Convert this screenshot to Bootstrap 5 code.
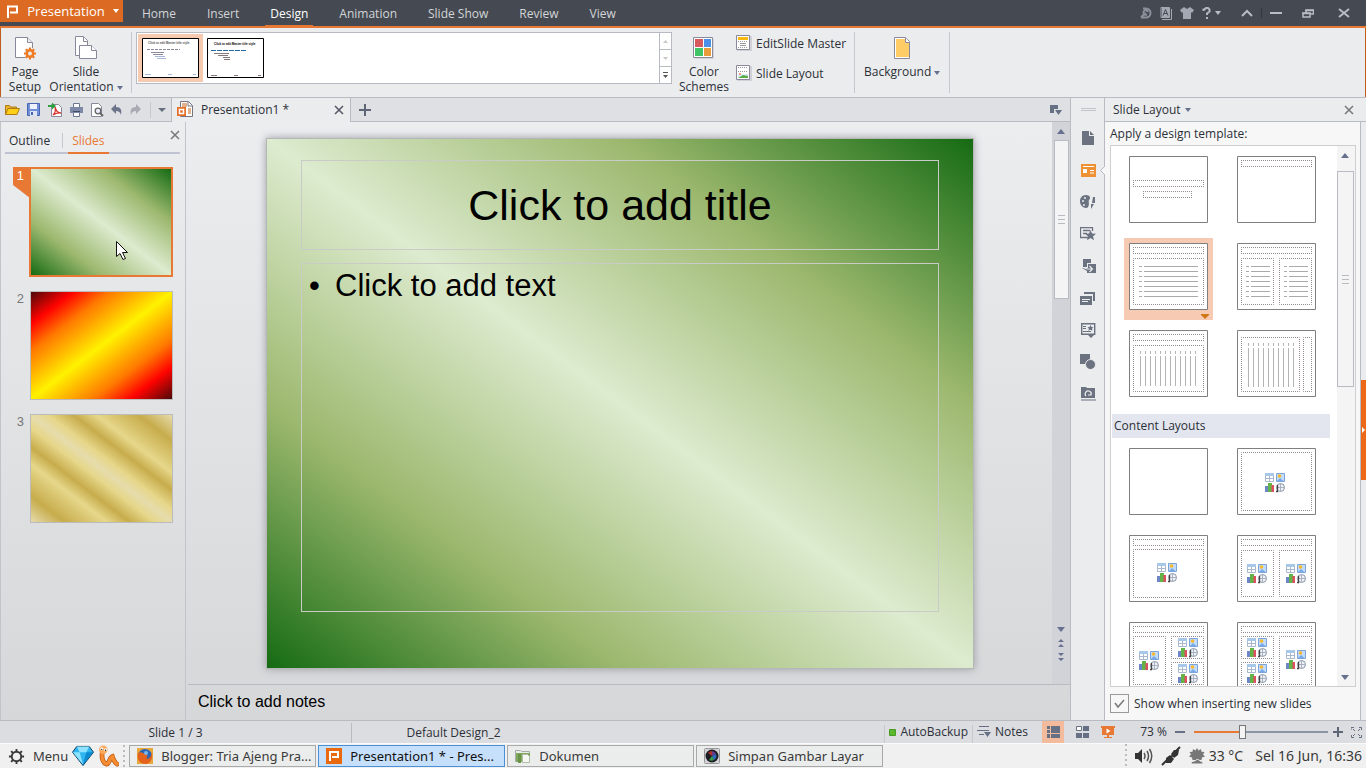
<!DOCTYPE html>
<html lang="en">
<head>
<meta charset="utf-8">
<meta name="viewport" content="width=device-width, initial-scale=1">
<title>Presentation1 - Presentation</title>
<link href="https://cdn.jsdelivr.net/npm/bootstrap@5.3.0/dist/css/bootstrap.min.css" rel="stylesheet">
<style>
:root{--accent:#e77935;--line:#b9bbc3;--ink:#2b3038;--slate:#6b7280}
body{font:12px/16px "Open Sans","Noto Sans",sans-serif;color:var(--ink);background:#ebecee}
button{color:inherit;font:inherit}
.plain{background:none;border:0;padding:0}
svg{display:block;flex:none}
a{color:inherit;text-decoration:none}
.min0{min-width:0;min-height:0}
/* title bar */
.topbar{height:28px;background:#454951;border-bottom:2px solid var(--accent);color:#d3d5d8}
.brand-btn{width:123px;height:22px;background:#dc6a22;color:#fff;padding:0 4px 0 6px}
.brand-btn span{font-size:13px}
.ribbon-tabs{gap:21px;margin-left:14px;height:28px}
.ribbon-tabs a{padding:6px 5px 3px;height:28px;border-bottom:3px solid transparent;white-space:nowrap}
.ribbon-tabs a.active{color:#fff;border-color:var(--accent)}
.wintools{color:#b9bcc6}
/* ribbon */
.ribbon{height:69px;border:solid #c25c1c;border-width:0 1px;padding:4px 0 0 8px}
.ribbon button{line-height:15px}
.vr-line{width:1px;background:#c6c8ce;align-self:stretch}
.gallery{width:536px;height:52px;border:1px solid var(--line);background:#fff;padding:1px 0 0 1px}
.gallery .pick{width:65px;height:48px;padding:4px}
.gallery .pick.on{background:#f6cab1}
.gal-scroll{width:12px;border-left:1px solid var(--line);margin-top:-1px}
.gal-scroll button{flex:1;border-bottom:1px solid var(--line);display:grid;place-items:center}
.gal-scroll button:last-child{border-bottom:0}
.stacked{gap:14px;padding-top:3px}
/* tab strip */
.strip{height:25px;background:#dfe0e4;border:solid var(--line);border-width:1px 0}
.quick{width:171px;padding:0 5px}
.doc-tab{width:180px;background:#ebecee;border:solid var(--line);border-width:0 1px;height:24px;padding:0 6px 0 5px}
.work{background:linear-gradient(#ecedef,#d6d7d9)}
/* slide list */
.slides-pane{width:186px;border:solid #c3c4ca;border-width:0 1px}
.pane-tabs{margin:0 5px 0 4px;border-bottom:2px solid #c0c4d2;height:32px}
.pane-tabs button{height:32px;padding:8px 4px 0;border-bottom:2px solid transparent}
.pane-tabs .on{color:var(--accent);border-color:var(--accent)}
.pane-tabs .shut{height:26px;padding:0;border:0}
.tab-sep{margin:11px 5px 4px 8px}
.num{width:28px;padding:1px 5px 0 0;text-align:right;color:#777;font:13px/15px "Liberation Sans",sans-serif}
.num.on{color:#fff}
.flag{position:absolute;left:12px;top:0}
.flag + span{position:relative}
.slide-thumb{width:143px;height:109px;border:1px solid #bbb;margin:1px 0 0 1px}
.slide-thumb.on{width:144px;height:110px;border:2px solid var(--accent);margin:0}
.g-green{background:linear-gradient(to top right,#156b13,#9cb86e 25%,#ddebcf 50%,#9cb86e 75%,#156b13)}
.g-fire{background:linear-gradient(to bottom right,#4d0808,#ff0300 15%,#ff7a00 28%,#fff200 50%,#ff7a00 72%,#ff0300 85%,#4d0808)}
.g-gold{background:linear-gradient(to top right,#e6dcac,#c7ac4c 12%,#e6d78a 27%,#c7ac4c 35%,#e6d78a 44%,#e6dcac 50%,#e6d78a 56%,#c7ac4c 65%,#e6d78a 73%,#c7ac4c 88%,#e6dcac)}
.pointer{position:absolute;left:85px;top:72px}
/* stage */
.stage{padding:0 78px 0 80px}
.slide{aspect-ratio:4/3;border:1px solid #b4b6b8;box-shadow:0 0 8px #9a9ca0;padding:21px 34px 56px;font-family:"Liberation Sans",sans-serif;color:#000;gap:13px}
.ph{border:1px solid #c9cbc6}
.ph-title{height:90px;font-size:43px;line-height:52px;font-weight:400}
.ph-body{font-size:31px;line-height:36px;padding:4px 7px}
.ph-body ul{padding-left:26px;list-style:none}
.ph-body li::before{content:"•";position:absolute;left:7px}
.notes{height:36px;border:0;border-top:1px solid var(--line);margin-left:2px;padding:7px 10px;background:none;resize:none;font:16px/20px "Liberation Sans",sans-serif;color:#000;overflow:hidden}
.vscroll{width:18px;background:#d2d3d9;padding-bottom:20px}
.knob{width:15px;border:1px solid var(--line);background:#f4f4f5;display:grid;place-items:center}
.arrow{display:grid;place-items:center;height:18px;width:16px;flex:none}
.arrow.short{height:14px}
.k-main{height:159px}
.k-lay{height:216px;width:17px;margin-top:7px}
/* right side */
.rail{width:34px;border:solid var(--line);border-width:1px 0 0 1px;color:var(--slate);padding:10px 0 0 1px}
.rail button{height:32px;display:grid;place-items:center;width:33px;flex:none}
.grip{margin-bottom:10px}
.task-pane{width:262px;border:1px solid var(--line);border-width:1px 0 0 1px}
.pane-head{height:24px;padding:0 12px 0 8px;border-bottom:1px solid var(--line)}
.pane-body{background:#f7f7f7;border-right:1px solid var(--line);margin-right:5px;padding:4px 4px 0 5px}
.layouts{border:1px solid #cfcfd2;background:#fff}
.lay-scroll{overflow:hidden;flex:1}
.lay-grid{display:grid;grid-template-columns:89px 89px;gap:5px 19px;padding:5px 13px 7px}
.lay-grid button{padding:5px 5px 10px;height:82px;position:relative}
.lay-grid .on{background:#f6cab3}
.lay-head{background:#e3e6ef;height:24px;margin:0 7px 0 1px;padding:4px 2px}
.lay-bar{width:18px;background:#f4f4f4}
.show-row{height:33px}
.show-row input{appearance:none;width:19px;height:19px;margin:0 5px 0 0;border:1px solid #999;background:#f7f7f7 url("data:image/svg+xml,%3Csvg xmlns='http://www.w3.org/2000/svg' viewBox='0 0 17 17'%3E%3Cpath d='M4 8l3 4 6-7' fill='none' stroke='%23777' stroke-width='1.5'/%3E%3C/svg%3E")}
.handle{position:absolute;right:0;top:283px;width:5px;height:100px;background:#ec6a17;display:grid;place-items:center}
/* status */
.status{height:23px;background:#dcdde1;border-top:1px solid var(--line)}
.status .cell{margin-top:2px;padding-top:2px;height:20px}
.status .c1{width:352px;border-right:1px solid var(--line)}
.status .c2{width:203px}
.view-on{width:22px;place-items:center;background:#f3bb9c;margin-left:14px}
.pct{width:56px}
.zoomer{appearance:none;width:134px;height:16px;margin:0 5px;background:none}
.zoomer::-webkit-slider-runnable-track{height:2px;background:linear-gradient(90deg,var(--accent) 36%,#8a95a6 36%)}
.zoomer::-webkit-slider-thumb{appearance:none;width:7px;height:14px;margin-top:-6px;border:1px solid #777;background:#f4f4f4}
/* desktop panel */
.deskbar{height:25px;background:#f0f0f0;border-top:1px solid #fafafa;font-family:"Noto Sans",sans-serif;font-size:13px;color:#3a3a3a;padding-top:1px}
.deskbar .task{width:187px;height:22px;border:1px solid #a9a9a9;background:#ebedec;padding:0 7px;gap:8px;text-align:left}
.deskbar .task.on{background:#c6dffb;border-color:#4a90d9;color:#111}
.menu-btn{height:22px;gap:8px}
.tray{height:22px}
.tray span{font-size:14px;white-space:nowrap}
.dots{width:2px;height:24px;background:repeating-linear-gradient(#bbb 0 2px,transparent 2px 5px)}
</style>
</head>
<body class="vh-100 d-flex flex-column overflow-hidden">
<svg width="0" height="0" class="position-absolute" aria-hidden="true">
<defs>
<symbol id="dn" viewBox="0 0 8 5"><path d="M0 0h8L4 5z"/></symbol>
<symbol id="up" viewBox="0 0 8 5"><path d="M0 5h8L4 0z"/></symbol>
<symbol id="x" viewBox="0 0 10 10"><path d="M1 1l8 8M9 1l-8 8" stroke="currentColor" stroke-width="1.500" fill="none"/></symbol>
<symbol id="media" viewBox="0 0 20 20">
<path fill="#fff" stroke="#a9b8cc" d="M.5.500h8v8h-8zM.5 5.500h8M4.500 3v5.500"/><path fill="#a8c8ea" d="M0 0h9v3H0z"/>
<path fill="#c4dcf8" stroke="#7ba4dc" d="M11.500.500h8v8h-8z"/><path d="M12 8l3-3 4 3.500z" fill="#77a9e8"/><circle cx="14.500" cy="3" r="1.800" fill="#f5b82e"/>
<path fill="#6d86c8" d="M0 13h4v6H0z"/><path fill="#63b447" d="M3 10h4v9H3z"/><path fill="#dd5060" d="M6.500 12H9v7H6.500z"/>
<circle cx="15.500" cy="14.500" r="4" fill="#eef1f6" stroke="#8b97a8"/><path d="M15.500 11v7M12 14.500h7" stroke="#9aa5b8" stroke-width=".8"/><path d="M12.500 12v6.500H11" stroke="#444" fill="none" stroke-width="1.300"/>
</symbol>
<symbol id="frame" viewBox="0 0 79 67"><path d="M.5.500h78v66h-78z" fill="#fff" stroke="#7f7f7f"/></symbol>
<symbol id="ttl" viewBox="0 0 79 67"><path d="M4 4.500h71M4 10.500h71M4.500 4v7M74.500 4v7" stroke="#928c90" stroke-dasharray="1 1"/></symbol>
<symbol id="gear" viewBox="0 0 18 18"><circle cx="9" cy="9" r="5" fill="none" stroke="currentColor" stroke-width="2"/><path d="M9 1v3M9 14v3M1 9h3M14 9h3M3.300 3.300l2 2M12.700 12.700l2 2M3.300 14.700l2-2M12.700 5.300l2-2" stroke="currentColor" stroke-width="2"/></symbol>
</defs>
</svg>

<header class="topbar d-flex flex-shrink-0">
  <button class="plain brand-btn d-flex align-items-center justify-content-between">
    <svg width="13" height="13" viewBox="0 0 13 13"><path d="M2 13V1.500h9v6H4" fill="none" stroke="#fff" stroke-width="2"/></svg>
    <span>Presentation</span><svg width="6" height="4" fill="#fff"><path d="M0 0h6L3 4z"/></svg>
  </button>
  <nav class="ribbon-tabs d-flex"><a href="#">Home</a><a href="#">Insert</a><a href="#" class="active">Design</a><a href="#">Animation</a><a href="#">Slide Show</a><a href="#">Review</a><a href="#">View</a></nav>
  <div class="wintools ms-auto d-flex align-items-center pe-3">
    <button class="plain me-2" aria-label="Cloud"><svg width="12" height="12" viewBox="0 0 12 12" fill="none" stroke="#8b8f9a" stroke-width="2"><path d="M3 1.500h3a4.500 4.500 0 0 1 0 9H1M8 5a2.300 2.300 0 1 0-1 2.500M1 10l5-4"/></svg></button>
    <button class="plain me-2" aria-label="Language"><svg width="12" height="13"><path d="M1 .5h8.500v10H1zM11.500 2v10.500H2" fill="none" stroke="#a4a8b3"/><path d="M2 1h7v9H2z" fill="#a4a8b3"/><path d="M3 8.500l2.500-6 2.500 6M4 6.500h3" stroke="#454951" fill="none"/></svg></button>
    <button class="plain me-2" aria-label="Skin"><svg width="14" height="12" fill="#a4a8b3"><path d="M4 0l3 2 3-2 4 3-2 3-1-1v7H3V5L2 6 0 3z"/></svg></button>
    <button class="plain me-3 d-flex align-items-center gap-1" aria-label="Help"><svg width="9" height="12" fill="none" stroke="#b4b7c0" stroke-width="2"><path d="M1.500 4V2.500h1L4 1h2l1.500 1.500v2L5 6.500V8M4 11h2"/></svg><svg width="6" height="4" fill="#b9bcc6"><path d="M0 0h6L3 4z"/></svg></button>
    <button class="plain ms-1 me-2" aria-label="Collapse ribbon"><svg width="12" height="8" fill="none" stroke="currentColor" stroke-width="2"><path d="M1 7l5-5 5 5"/></svg></button>
    <span class="vr-line my-2 me-2" style="background:#33363c"></span>
    <button class="plain me-3" aria-label="Minimise"><svg width="12" height="2" fill="currentColor"><path d="M0 0h12v2H0z"/></svg></button>
    <button class="plain ms-1 me-4" aria-label="Restore"><svg width="12" height="9" fill="none" stroke="currentColor" stroke-width="1.500"><path d="M1 4h7v4H1zM4 4V1h7.500v4H9"/><path d="M0 4.500h9M3 1.500h9"/></svg></button>
    <button class="plain" aria-label="Close"><svg width="12" height="10" fill="none" stroke="currentColor" stroke-width="2"><path d="M1 1l10 8M11 1L1 9"/></svg></button>
  </div>
</header>

<section class="ribbon d-flex flex-shrink-0">
  <button class="plain d-flex flex-column align-items-center pt-1" style="width:32px">
    <svg width="24" height="24" viewBox="0 0 24 24" class="mb-1"><path d="M2.500 1.500h12l5 5v15h-17z" fill="#fff" stroke="#8c889c"/><path d="M14.500 1.500v5h5" fill="#eee" stroke="#8c889c"/><circle cx="17" cy="17.500" r="6" fill="#ebecee"/><circle cx="17" cy="17.500" r="3.200" fill="none" stroke="#ee7b24" stroke-width="2.500"/><path d="M17 11.500v3M17 20.500v3M11 17.500h3M20 17.500h3M12.800 13.300l2 2M19.200 19.700l2 2M12.800 21.700l2-2M19.200 15.300l2-2" stroke="#ee7b24" stroke-width="2"/></svg>Page<br>Setup</button>
  <button class="plain d-flex flex-column align-items-center pt-1 ms-2" style="width:74px">
    <svg width="24" height="24" viewBox="0 0 24 24" class="mb-1" fill="#fff" stroke="#8c889c"><path d="M1.500.500h8l4 4v15h-12z"/><path d="M9.500.500v5h4M5.500 9.500h12l5 5v8h-17z"/><path d="M17.500 9.500v5h5"/></svg>Slide<span class="text-nowrap">Orientation <svg class="d-inline" width="6" height="4" fill="#687090"><path d="M0 0h6L3 4z"/></svg></span></button>
  <span class="vr-line mb-1 ms-2 me-1"></span>
  <div class="gallery d-flex">
    <button class="plain pick on" aria-label="Design 1"><svg width="57" height="40" font-family="Liberation Sans"><path d="M.5.500h56v39H.5z" fill="#fff" stroke="#000"/><text x="6" y="6" font-size="3" fill="#555" font-weight="700">Click to edit Master title style</text><path d="M5 11.500h33" stroke="#889" stroke-dasharray="3 1"/><g fill="#889"><path d="M9 14h13v1H9zM11 16h10v1H11z"/><path fill="#a9b8d8" d="M13 18h10v1H13zM15 20h9v1h-9zM3 36h6v1H3zM26 36h4v1h-4zM51 36h3v1h-3z"/></g></svg></button>
    <button class="plain pick" aria-label="Design 2"><svg width="57" height="40" font-family="Liberation Sans"><path d="M.5.500h56v39H.5z" fill="#fff" stroke="#000"/><text x="7" y="7" font-size="3" font-weight="700">Click to edit Master title style</text><path d="M4 12.500h35" stroke="#246a9e" stroke-dasharray="5 1"/><path d="M7 15h15v1H7zM11 17h10v1H11zM16 19h7v1h-7zM17 21h6v1h-6zM4 37h6v1H4zM27 37h4v1h-4zM51 37h3v1h-3z" fill="#877"/></svg></button>
    <div class="gal-scroll ms-auto d-flex flex-column">
      <button class="plain" aria-label="Up"><svg width="5" height="3" fill="#c8c8cc"><path d="M0 3h5L2.500 0z"/></svg></button>
      <button class="plain" aria-label="Down"><svg width="5" height="3" fill="#c8c8cc"><path d="M0 0h5L2.500 3z"/></svg></button>
      <button class="plain" aria-label="More"><svg width="5" height="6" fill="#555"><path d="M0 0h5v1H0zM0 3h5L2.500 6z"/></svg></button>
    </div>
  </div>
  <button class="plain d-flex flex-column align-items-center pt-1 ms-2" style="width:48px">
    <svg width="24" height="24" viewBox="0 0 24 24" class="mb-1"><path d="M3 3h19v20H3z" fill="#d5d6dc"/><path d="M1.500 1.500h19v20h-19z" fill="#fff" stroke="#8c889c"/><path d="M3 3h8v8H3z" fill="#d85a5c"/><path d="M12 3h7v8h-7z" fill="#4a90e8"/><path d="M3 12h8v8H3z" fill="#41c467"/><path d="M12 12h7v8h-7z" fill="#e89c3c"/></svg>Color<br>Schemes</button>
  <div class="d-flex flex-column ms-2 stacked">
    <button class="plain d-flex align-items-center gap-1"><svg width="16" height="16"><path d="M1 1h15v15H1z" fill="#d0d2d8"/><path d="M.5.500h13v14H.5z" fill="#fff" stroke="#8c889c"/><path d="M2 2h10v3H2z" fill="#f9b90f"/><path d="M2 6.500h10M2 12.500h10" stroke="#999" stroke-dasharray="1 1"/><path d="M4 8.500h6M4 10.500h6" stroke="#999"/></svg>EditSlide Master</button>
    <button class="plain d-flex align-items-center gap-1"><svg width="16" height="16"><path d="M1 1h15v15H1z" fill="#d0d2d8"/><path d="M.5.500h13v14H.5z" fill="#fff" stroke="#8c889c"/><path d="M2 2.500h10M2 6.500h10" stroke="#999" stroke-dasharray="1 1"/><path d="M2 9h10v4H2z" fill="#dcecfa"/><path d="M2 13l5-3 5 1v2z" fill="#5bad46"/><circle cx="4" cy="9" r="1" fill="#f08060"/></svg>Slide Layout</button>
  </div>
  <span class="vr-line mb-1 ms-2 me-2"></span>
  <button class="plain d-flex flex-column align-items-center pt-1" style="width:78px">
    <svg width="24" height="24" viewBox="0 0 24 24" class="mb-1"><path d="M4.500 1.500h11l4 4v17h-15z" fill="#fff" stroke="#8c889c"/><path d="M6 3h9v4h4v14H6z" fill="#ffcc66"/><path d="M15.500 1.500v5h4" fill="#fff" stroke="#8c889c"/></svg><span class="text-nowrap">Background <svg class="d-inline" width="6" height="4" fill="#687090"><path d="M0 0h6L3 4z"/></svg></span></button>
  <span class="vr-line mb-1 ms-2"></span>
</section>

<main class="d-flex flex-fill min0 position-relative">
  <div class="d-flex flex-column flex-fill min0">
    <div class="strip d-flex align-items-center flex-shrink-0">
      <div class="quick d-flex align-items-center justify-content-between">
        <button class="plain" aria-label="Open"><svg width="15" height="13"><path d="M.5 11.500v-9h4l1 1.500h6v3" fill="#e8b32e" stroke="#b07a14"/><path d="M.5 11.500l2.500-6h11.500l-2.500 6z" fill="#fdd017" stroke="#b07a14"/></svg></button>
        <button class="plain" aria-label="Save"><svg width="13" height="14"><path d="M.5.500h12v12H.5z" fill="#6f8fd8" stroke="#4a66b0"/><path d="M3 1h7v5H3z" fill="#eef2fc"/><path d="M3 8h7v5H3z" fill="#dde4f6"/><path d="M4 9h2v3H4z" fill="#4a66b0"/></svg></button>
        <button class="plain" aria-label="Export PDF"><svg width="15" height="16"><path d="M3.500 2.500h7l3 3v9h-10z" fill="#fff" stroke="#8c889c"/><path d="M5 13c3-3 3-5 2-8 1 4 3 6 6 6-3-.5-5 0-8 2z" fill="none" stroke="#d8322c" stroke-width="1.300"/><path d="M0 3h4V.500L8 4 4 7.500V5H0z" fill="#2fa042"/></svg></button>
        <button class="plain" aria-label="Print"><svg width="13" height="14"><path d="M3.500.500h6v4h-6zM3.500 8.500h6v5h-6z" fill="#fff" stroke="#6d7690"/><path d="M0 4h13v6H0z" fill="#7e89a8"/><path d="M3 8h7v1H3z" fill="#444c66"/></svg></button>
        <button class="plain" aria-label="Print preview"><svg width="13" height="14"><path d="M.5.500h7l3 3v10H.5z" fill="#fff" stroke="#8c889c"/><circle cx="7" cy="8" r="2.800" fill="#eef" stroke="#666" stroke-width="1.300"/><path d="M9 10l3 3" stroke="#666" stroke-width="2"/></svg></button>
        <button class="plain" aria-label="Undo"><svg width="12" height="12"><path d="M0 5l5-5v3c5 0 6 3 5 8-1-3-2-4-5-4v3z" fill="#6b7488"/></svg></button>
        <button class="plain" aria-label="Redo"><svg width="12" height="12"><path d="M11 5L6 0v3C1 3 0 6 1 11c1-3 2-4 5-4v3z" fill="#a8abb2"/></svg></button>
        <span class="vr-line"></span>
        <button class="plain" aria-label="Customise"><svg width="8" height="4" fill="#687080"><path d="M0 0h8L4 4z"/></svg></button>
      </div>
      <div class="doc-tab d-flex align-items-center">
        <svg width="16" height="17" class="me-2"><path d="M3.500.500h8l4 4v11h-12z" fill="#fff" stroke="#77737f"/><path d="M11 1v4h4" fill="none" stroke="#77737f"/><path d="M5 3h5M11 8h3M11 10h3M11 12h3M5 5h5" stroke="#c4621e"/><path d="M0 6h9v9H0z" fill="#e5702a"/><path d="M2.500 8.500h4v4h-4z" fill="none" stroke="#fff" stroke-width="1.500"/></svg>
        <span>Presentation1 *</span><button class="plain ms-auto" aria-label="Close document"><svg width="10" height="10" color="#556"><use href="#x"/></svg></button>
      </div>
      <button class="plain ms-2" aria-label="New tab"><svg width="12" height="12"><path d="M6 0v12M0 6h12" stroke="#5d6577" stroke-width="2"/></svg></button>
      <button class="plain ms-auto me-2" aria-label="Tab list"><svg width="12" height="10" fill="#667085"><path d="M0 0h8v4H4v4H0z"/><path d="M5 5h7l-3.500 5z"/></svg></button>
    </div>
    <div class="work d-flex flex-fill min0">
      <aside class="slides-pane d-flex flex-column flex-shrink-0">
        <div class="pane-tabs d-flex flex-shrink-0">
          <button class="plain">Outline</button><span class="vr-line tab-sep"></span><button class="plain on">Slides</button>
          <button class="plain shut ms-auto" aria-label="Close pane"><svg width="10" height="10" color="#777"><use href="#x"/></svg></button>
        </div>
        <div class="d-flex flex-column" style="gap:13px;padding-top:13px">
          <div class="d-flex position-relative"><svg class="flag" width="17" height="31" fill="#e77935"><path d="M0 0h17v31L0 18z"/></svg><span class="num on">1</span><div class="slide-thumb on g-green position-relative"><svg class="pointer" width="13" height="20"><path d="M.5.500v15l3.500-3 3 6 2.500-1-3-6h5z" fill="#fff" stroke="#111"/></svg></div></div>
          <div class="d-flex"><span class="num">2</span><div class="slide-thumb g-fire"></div></div>
          <div class="d-flex"><span class="num">3</span><div class="slide-thumb g-gold"></div></div>
        </div>
      </aside>
      <div class="d-flex flex-column flex-fill min0">
        <div class="d-flex flex-fill min0">
          <div class="stage flex-fill d-flex align-items-center min0">
            <article class="slide g-green w-100 d-flex flex-column">
              <h1 class="ph ph-title m-0 d-flex align-items-center justify-content-center">Click to add title</h1>
              <div class="ph ph-body flex-fill position-relative"><ul class="m-0"><li>Click to add text</li></ul></div>
            </article>
          </div>
          <div class="vscroll d-flex flex-column align-items-center">
            <span class="arrow"><svg width="8" height="5" fill="#687090"><use href="#up"/></svg></span>
            <div class="knob k-main"><svg width="7" height="9"><path d="M0 .5h7M0 4.500h7M0 8.500h7" stroke="#b9bbc3"/></svg></div>
            <span class="arrow short mt-auto"><svg width="8" height="5" fill="#687090"><use href="#dn"/></svg></span>
            <span class="arrow short"><svg width="6" height="8" fill="#687090"><path d="M0 3h6L3 0zM0 8h6L3 5z"/></svg></span>
            <span class="arrow short"><svg width="6" height="8" fill="#687090"><path d="M0 0h6L3 3zM0 5h6L3 8z"/></svg></span>
          </div>
        </div>
        <textarea class="notes flex-shrink-0" aria-label="Notes">Click to add notes</textarea>
      </div>
    </div>
  </div>

  <nav class="rail d-flex flex-column flex-shrink-0 align-items-center">
    <svg width="15" height="4" class="grip"><path d="M0 .5h15M0 2.500h15" stroke="#c3c4ca"/></svg>
    <button class="plain" aria-label="New"><svg width="12" height="14" fill="currentColor"><path d="M0 0h7v5h5v9H0z"/><path d="M8 0l4 4H8z"/></svg></button>
    <button class="plain position-relative" aria-label="Slide layout"><svg width="15" height="13"><path d="M0 0h15v13H0z" fill="#ee9034"/><path d="M2 2.500h11M9 6.500h4M9 9h4" stroke="#fff"/><path d="M2 5h4v4H2z" fill="#fff"/></svg><svg class="position-absolute end-0" width="5" height="9"><path d="M5 0L.5 4.500 5 9" fill="#f7f7f7" stroke="#b9bbc3"/></svg></button>
    <button class="plain" aria-label="Colors"><svg width="16" height="14" fill="currentColor"><path d="M6 0c4 0 5 3 3 5-1 2 1 4-1 7-1 2-8 1-8-6 0-3 2-6 6-6z"/><path d="M13 2h2v6h-3zM11 9h3l-3 5z"/><g fill="#ebecee"><circle cx="5" cy="3" r="1"/><circle cx="3" cy="6" r="1"/><circle cx="4" cy="10" r="1"/></g></svg></button>
    <button class="plain" aria-label="Animation"><svg width="16" height="14"><path d="M8 10.500H.5V.500h12V4M3 3.500h7M3 6.500h4" fill="none" stroke="currentColor" stroke-width="1.300"/><path d="M10.500 3l1.500 3.500 4 .3-3 2.500 1 4-3.500-2.300L7 13.300l1-4-3-2.500 4-.3z" fill="currentColor"/></svg></button>
    <button class="plain" aria-label="Transition"><svg width="15" height="14" fill="currentColor"><path d="M2 0h8v4H6v4H2z"/><path d="M7 5h8v9H6v-2L1 9h6z"/><path d="M2 8.500L6 10h5M8.500 7l3 3-3 3" fill="none" stroke="#ebecee" stroke-width="1.200"/></svg></button>
    <button class="plain" aria-label="Duplicate"><svg width="16" height="13" fill="currentColor"><path d="M4 0h11v9h-2V2H4z"/><path d="M0 4h12v9H0z"/><path d="M2 7.500h8M2 9.500h6" stroke="#ebecee"/></svg></button>
    <button class="plain" aria-label="Favourites"><svg width="15" height="15"><path d="M.7.700h13v10.600H.7z" fill="none" stroke="currentColor" stroke-width="1.400"/><path d="M2 3.500h3M2 5.500h3M2 8.500h8" stroke="currentColor"/><path d="M9.500 2l1 2 2 .3-1.500 1.500.4 2-2-1-2 1 .5-2L6.500 4.300l2-.3zM7 12h6l-3 3z" fill="currentColor"/></svg></button>
    <button class="plain" aria-label="Shapes"><svg width="16" height="16"><path d="M0 0h10v10H0z" fill="currentColor"/><circle cx="10.500" cy="10.500" r="5" fill="currentColor" stroke="#ebecee"/></svg></button>
    <button class="plain" aria-label="Resources"><svg width="15" height="14"><path d="M0 0h5l1 1h8v10H0zM0 12.500h15v1H0z" fill="currentColor"/><path d="M5 9a3 3 0 1 1 5-1M10 5v3H7" fill="none" stroke="#ebecee" stroke-width="1.200"/></svg></button>
  </nav>

  <aside class="task-pane d-flex flex-column flex-shrink-0">
    <div class="pane-head d-flex align-items-center flex-shrink-0"><button class="plain d-flex align-items-center gap-1">Slide Layout<svg width="6" height="4" fill="#687090"><path d="M0 0h6L3 4z"/></svg></button><button class="plain ms-auto" aria-label="Close task pane"><svg width="10" height="10" color="#777"><use href="#x"/></svg></button></div>
    <div class="pane-body d-flex flex-column flex-fill min0">
      <div class="flex-shrink-0" style="height:19px">Apply a design template:</div>
      <div class="layouts d-flex flex-fill min0">
        <div class="lay-scroll">
          <div class="lay-grid">
            <button class="plain" aria-label="Title slide"><svg width="79" height="67"><use href="#frame"/><path d="M4 24.500h71M4 30.500h71M4.500 24v7M74.500 24v7M14 35.500h49M14 41.500h49M14.500 35v7M62.500 35v7" stroke="#928c90" stroke-dasharray="1 1"/></svg></button>
            <button class="plain" aria-label="Title only"><svg width="79" height="67"><use href="#frame"/><use href="#ttl"/></svg></button>
            <button class="plain on" aria-label="Title and text"><svg width="79" height="67"><use href="#frame"/><use href="#ttl"/><path d="M4.500 15.500h70v46h-70z" fill="none" stroke="#928c90" stroke-dasharray="1 1" stroke-dashoffset=".5"/><path d="M10 23.500h3m2 0h54M10 28.500h3m2 0h54M10 33.500h3m2 0h54M10 38.500h3m2 0h54M10 43.500h3m2 0h54M10 48.500h3m2 0h54M10 53.500h3m2 0h54" stroke="#aaa"/></svg><svg class="position-absolute end-0 bottom-0 me-1" width="8" height="6" fill="#d07818"><path d="M0 0h8v1L4 5 0 1z"/></svg></button>
            <button class="plain" aria-label="Two columns text"><svg width="79" height="67"><use href="#frame"/><use href="#ttl"/><path d="M4.500 15.500h32v46h-32zM42.500 15.500h32v46h-32z" fill="none" stroke="#928c90" stroke-dasharray="1 1" stroke-dashoffset=".5"/><path d="M9 23.500h3m2 0h19m14 0h3m2 0h19M9 28.500h3m2 0h19m14 0h3m2 0h19M9 33.500h3m2 0h19m14 0h3m2 0h19M9 38.500h3m2 0h19m14 0h3m2 0h19M9 43.500h3m2 0h19m14 0h3m2 0h19M9 48.500h3m2 0h19m14 0h3m2 0h19M9 53.500h3m2 0h19m14 0h3m2 0h19" stroke="#aaa"/></svg></button>
            <button class="plain" aria-label="Vertical text"><svg width="79" height="67"><use href="#frame"/><use href="#ttl"/><path d="M4.500 15.500h70v46h-70z" fill="none" stroke="#928c90" stroke-dasharray="1 1" stroke-dashoffset=".5"/><path d="M11.500 21v3m0 2v30M16.500 21v3m0 2v30M21.500 21v3m0 2v30M26.500 21v3m0 2v30M31.500 21v3m0 2v30M36.500 21v3m0 2v30M41.500 21v3m0 2v30M46.500 21v3m0 2v30M51.500 21v3m0 2v30M56.500 21v3m0 2v30M61.500 21v3m0 2v30M66.500 21v3m0 2v30" stroke="#b4b4b4"/></svg></button>
            <button class="plain" aria-label="Vertical title and text"><svg width="79" height="67"><use href="#frame"/><path d="M4.500 7.500h58v54h-58zM66.500 7.500h8v54h-8z" fill="none" stroke="#928c90" stroke-dasharray="1 1" stroke-dashoffset=".5"/><path d="M11.500 13v3m0 2v39M16.500 13v3m0 2v39M21.500 13v3m0 2v39M26.500 13v3m0 2v39M31.500 13v3m0 2v39M36.500 13v3m0 2v39M41.500 13v3m0 2v39M46.500 13v3m0 2v39M51.500 13v3m0 2v39M56.500 13v3m0 2v39" stroke="#b4b4b4"/></svg></button>
          </div>
          <div class="lay-head">Content Layouts</div>
          <div class="lay-grid">
            <button class="plain" aria-label="Blank"><svg width="79" height="67"><use href="#frame"/></svg></button>
            <button class="plain" aria-label="Content"><svg width="79" height="67"><use href="#frame"/><path d="M4.500 4.500h70v58h-70z" fill="none" stroke="#928c90" stroke-dasharray="1 1" stroke-dashoffset=".5"/><use href="#media" x="28" y="25" width="20" height="20"/></svg></button>
            <button class="plain" aria-label="Title and content"><svg width="79" height="67"><use href="#frame"/><use href="#ttl"/><path d="M4.500 14.500h70v48h-70z" fill="none" stroke="#928c90" stroke-dasharray="1 1" stroke-dashoffset=".5"/><use href="#media" x="28" y="28" width="20" height="20"/></svg></button>
            <button class="plain" aria-label="Two contents"><svg width="79" height="67"><use href="#frame"/><use href="#ttl"/><path d="M4.500 15.500h32v46h-32zM42.500 15.500h32v46h-32z" fill="none" stroke="#928c90" stroke-dasharray="1 1" stroke-dashoffset=".5"/><use href="#media" x="10" y="29" width="20" height="20"/><use href="#media" x="49" y="29" width="20" height="20"/></svg></button>
            <button class="plain" aria-label="One and two contents"><svg width="79" height="67"><use href="#frame"/><use href="#ttl"/><path d="M4.500 14.500h32v48h-32zM42.500 14.500h32v22h-32zM42.500 40.500h32v22h-32z" fill="none" stroke="#928c90" stroke-dasharray="1 1" stroke-dashoffset=".5"/><use href="#media" x="10" y="29" width="20" height="20"/><use href="#media" x="49" y="16" width="20" height="20"/><use href="#media" x="49" y="42" width="20" height="20"/></svg></button>
            <button class="plain" aria-label="Two and one contents"><svg width="79" height="67"><use href="#frame"/><use href="#ttl"/><path d="M42.500 14.500h32v48h-32zM4.500 14.500h32v22h-32zM4.500 40.500h32v22h-32z" fill="none" stroke="#928c90" stroke-dasharray="1 1" stroke-dashoffset=".5"/><use href="#media" x="49" y="28" width="20" height="20"/><use href="#media" x="10" y="16" width="20" height="20"/><use href="#media" x="10" y="42" width="20" height="20"/></svg></button>
          </div>
        </div>
        <div class="lay-bar d-flex flex-column flex-shrink-0">
          <span class="arrow"><svg width="8" height="5" fill="#687090"><use href="#up"/></svg></span>
          <div class="knob k-lay"><svg width="7" height="9"><path d="M0 .5h7M0 4.500h7M0 8.500h7" stroke="#b9bbc3"/></svg></div>
          <span class="arrow mt-auto"><svg width="8" height="5" fill="#687090"><use href="#dn"/></svg></span>
        </div>
      </div>
      <label class="show-row d-flex align-items-center flex-shrink-0"><input type="checkbox" checked>Show when inserting new slides</label>
    </div>
  </aside>
  <button class="plain handle" aria-label="Toggle task pane"><svg width="3" height="6" fill="#fff"><path d="M0 0l3 3-3 3z"/></svg></button>
</main>

<footer class="status d-flex flex-shrink-0">
  <div class="cell c1 text-center">Slide 1 / 3</div>
  <div class="cell c2 text-center">Default Design_2</div>
  <div class="ms-auto d-flex align-items-center">
    <span class="vr-line mt-1"></span>
    <button class="plain d-flex align-items-center gap-1 ms-1"><svg width="7" height="7"><path d="M.5.500h6v6h-6z" fill="#5ab82e" stroke="#4a9a26"/></svg>AutoBackup</button>
    <span class="vr-line mt-1 ms-1"></span>
    <button class="plain d-flex align-items-center gap-1 ms-1"><svg width="14" height="12" fill="#667085"><path d="M2 0h10v1H2zM0 4h12v1H0zM2 8h5v1H2zM7 6h7l-3.500 5z"/></svg>Notes</button>
    <button class="plain view-on h-100 d-grid" aria-label="Normal view"><svg width="13" height="12" fill="#667085"><path d="M0 0h3v3H0zM0 4h3v3H0zM0 8h3v4H0zM4 0h9v7H4zM4 8h9v4H4z"/></svg></button>
    <button class="plain ms-2 px-1" aria-label="Slide sorter"><svg width="13" height="12" fill="#667085"><path d="M7 0h6v5H7zM0 7h6v5H0zM7 7h6v5H7z"/><path d="M.5.500h5v4h-5z" fill="#fff" stroke="#667085"/></svg></button>
    <button class="plain ms-2" aria-label="Slide show"><svg width="14" height="13" fill="#e77935"><path d="M0 0h14v2H0zM1 2h12v7H1zM6 9h2v2H6zM3 11h8v1H3z"/><path d="M5.500 2.500v5L9.500 5z" fill="#fff"/></svg></button>
    <span class="pct text-end pe-1">73 %</span>
    <button class="plain ms-1 me-1" aria-label="Zoom out"><svg width="10" height="2"><path d="M0 0h10v2H0z" fill="#667085"/></svg></button>
    <input class="zoomer" type="range" min="0" max="200" value="71" aria-label="Zoom">
    <button class="plain me-2" aria-label="Zoom in"><svg width="10" height="10"><path d="M5 0v10M0 5h10" stroke="#5d6577" stroke-width="2"/></svg></button>
    <button class="plain me-1" aria-label="Fit"><svg width="11" height="11" fill="none" stroke="#667085"><path d="M0 3V.500h3M8 .5h2.500V3M10.500 8v2.500H8M3 10.500H.5V8M2 2l2 2M9 2L7 4M9 9L7 7M2 9l2-2"/></svg></button>
  </div>
</footer>

<footer class="deskbar d-flex flex-shrink-0 align-items-start">
  <button class="plain menu-btn d-flex align-items-center ms-2"><svg width="17" height="17" color="#3a3a3a" viewBox="0 0 18 18"><use href="#gear"/></svg>Menu</button>
  <button class="plain ms-1" aria-label="Diamond"><svg width="22" height="22" viewBox="0 0 23 22"><path d="M5 1h13l4.500 6L11.500 21 .5 7z" fill="#2fb4ee" stroke="#0c3c60"/><path d="M5 1l3 6h7l3-6zM1 7h7l3.500 13z" fill="#8ee2ff"/><path d="M15 7h7L11.500 20z" fill="#0c8ad0"/></svg></button>
  <button class="plain ms-1" aria-label="Worm"><svg width="21" height="22" viewBox="0 0 22 23"><path d="M5 5c-2 8 0 14 4 15 3 0 3-7 6-8 1 3 2 6 5 8" fill="none" stroke="#b85812" stroke-width="5" stroke-linecap="round"/><path d="M5 5c-2 8 0 14 4 15 3 0 3-7 6-8 1 3 2 6 5 8" fill="none" stroke="#f68c32" stroke-width="3.500" stroke-linecap="round"/><circle cx="5.500" cy="5" r="4.500" fill="#fba95c"/><circle cx="4" cy="4" r="1.600" fill="#fff"/><circle cx="8" cy="5" r="1.600" fill="#fff"/><circle cx="4" cy="4.500" r=".7"/><circle cx="8" cy="5.500" r=".7"/></svg></button>
  <span class="dots ms-1 me-1"></span>
  <div class="d-flex" style="gap:2px">
    <button class="plain task d-flex align-items-center"><svg width="16" height="16"><path d="M0 0h16v16H0z" fill="#e8a83c"/><circle cx="8" cy="8" r="7" fill="#2a66b4"/><path d="M1 5c3-2 5 0 7 1 3 0 3 3 1 4 3 2 5-1 6-6 1 9-3 12-7 12S-1 12 1 5z" fill="#e4621c"/><circle cx="9" cy="5" r="2" fill="#7cb6e8"/></svg><span class="text-nowrap">Blogger: Tria Ajeng Pra...</span></button>
    <button class="plain task on d-flex align-items-center"><svg width="16" height="16"><path d="M0 0h16v16H0z" fill="#e8690e"/><path d="M4 13V4h8v5H6" fill="none" stroke="#fff" stroke-width="2"/></svg><span class="text-nowrap">Presentation1 * - Pres...</span></button>
    <button class="plain task d-flex align-items-center"><svg width="16" height="16"><path d="M.5 13.500V2.500h5l1 1h8v10z" fill="#e8ebe6" stroke="#aaa"/><path d="M1 5h14v9H1z" fill="#82a860"/><path d="M3 6h3v9H3z" fill="#6a9448"/><path d="M7.500 6.500h5l2 2v6h-7z" fill="#f6f8f4" stroke="#b4bcac"/></svg><span>Dokumen</span></button>
    <button class="plain task d-flex align-items-center"><svg width="16" height="16"><rect x=".5" y=".5" width="15" height="15" rx="1" fill="#d4d4d8" stroke="#999"/><circle cx="8" cy="8" r="6.500" fill="#1c1c24"/><path d="M8 8l-4-3a5 5 0 0 1 4-2z" fill="#b03028"/><path d="M8 8V3a5 5 0 0 1 4 3z" fill="#6a3a8c"/><path d="M8 8l4-2a5 5 0 0 1-2 6z" fill="#2c6cc0"/><path d="M8 8l2 4a5 5 0 0 1-5 0z" fill="#3a9c48"/></svg><span>Simpan Gambar Layar</span></button>
  </div>
  <div class="tray ms-auto d-flex align-items-center pe-1">
    <i class="dots me-2"></i>
    <svg width="18" height="16" class="me-2"><path d="M0 5h3l4-4v14l-4-4H0z" fill="#333"/><path d="M9 5q2 3 0 6M12 3q3 5 0 10M14.500 1q4.500 7 0 14" fill="none" stroke="#555" stroke-width="1.500"/></svg>
    <svg width="20" height="20" class="me-2"><path d="M1 19l5-5M19 1l-5 5" stroke="#333" stroke-width="2"/><path d="M5 12l4-3 4 4-3 4-5 0zM10 8l3-4h5l-1 5-4 3z" fill="#333"/><path d="M9 12l4-4" stroke="#333" stroke-width="2"/></svg>
    <svg width="16" height="17" class="me-1" fill="#777"><path d="M8 0l1.500 2.500L12 1l.5 2.800L15.500 4 14 6.500 16 8.500l-3 1-.5 2.500H3.500L3 9.500l-3-1 2-2L.5 4l3-.2L4 1l2.500 1.500z"/><path d="M2 16c0-3 3-3 4-3 1-2 4-2 5 0 2 0 3 1 3 3z" stroke="#f0f0f0"/></svg>
    <span class="me-2 pe-1">33 °C</span><span>Sel 16 Jun, 16:36</span>
  </div>
</footer>
<script src="https://cdn.jsdelivr.net/npm/bootstrap@5.3.0/dist/js/bootstrap.bundle.min.js"></script>
</body>
</html>
